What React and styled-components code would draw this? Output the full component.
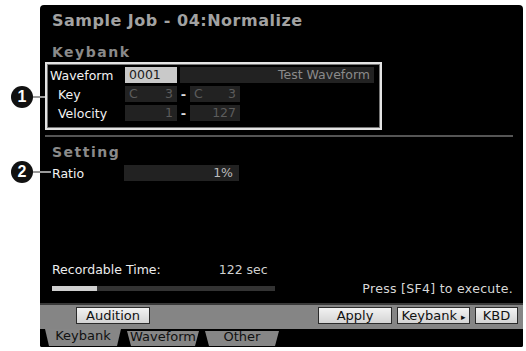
import React from "react";
import styled, { createGlobalStyle } from "styled-components";

const GlobalStyle = createGlobalStyle`
  html, body {
    margin: 0;
    padding: 0;
    background: #ffffff;
  }
  body {
    font-family: "DejaVu Sans", "Liberation Sans", sans-serif;
  }
`;

const App = () => {
  return (
    <>
      <GlobalStyle />
      <Page>
        <Callout top={86}>1</Callout>
        <Leader top={96} width={12} />
        <Callout top={161}>2</Callout>
        <Leader top={171} width={18} />
        <Screen>
          <Title>Sample Job - 04:Normalize</Title>
          <Heading>Keybank</Heading>
          <KeyBox>
            <Row>
              <Label>Waveform</Label>
              <Field tone="light">0001</Field>
              <Field tone="dark" wide align="right">
                Test Waveform
              </Field>
            </Row>
            <Row>
              <Label indent>Key</Label>
              <Field tone="dim" align="spread">
                <span>C</span>
                <span>3</span>
              </Field>
              <Dash>-</Dash>
              <Field tone="dim" align="spread">
                <span>C</span>
                <span>3</span>
              </Field>
            </Row>
            <Row>
              <Label indent>Velocity</Label>
              <Field tone="dim" align="right">
                1
              </Field>
              <Dash>-</Dash>
              <Field tone="dim" align="right">
                127
              </Field>
            </Row>
          </KeyBox>
          <Separator />
          <Heading second>Setting</Heading>
          <RatioRow>
            <Label>Ratio</Label>
            <RatioField>1%</RatioField>
          </RatioRow>
          <Spacer />
          <TimeRow>
            <span>Recordable Time:</span>
            <TimeValue>122 sec</TimeValue>
          </TimeRow>
          <StatusRow>
            <Progress>
              <ProgressFill style={{ width: "20%" }} />
            </Progress>
            <Hint>Press [SF4] to execute.</Hint>
          </StatusRow>
          <ButtonBar>
            <Button width={74} style={{ marginLeft: 36 }}>
              Audition
            </Button>
            <Grow />
            <Button width={74}>Apply</Button>
            <Button width={73}>
              Keybank <Arrow>▸</Arrow>
            </Button>
            <Button width={43}>KBD</Button>
          </ButtonBar>
          <Tabs>
            <Tab active width={76}>
              Keybank
            </Tab>
            <Tab width={72}>Waveform</Tab>
            <Tab width={74}>Other</Tab>
          </Tabs>
        </Screen>
      </Page>
    </>
  );
};

const Page = styled.div`
  position: relative;
  width: 526px;
  height: 351px;
  padding: 5px 3px 4px 40px;
  box-sizing: border-box;
  display: flex;
`;

const Callout = styled.div`
  position: absolute;
  left: 11px;
  top: ${(p) => p.top}px;
  width: 22px;
  height: 22px;
  border-radius: 50%;
  background: #111;
  color: #fff;
  font-family: "Liberation Sans", Arial, sans-serif;
  font-weight: bold;
  font-size: 16px;
  line-height: 22px;
  text-align: center;
  z-index: 2;
`;

const Leader = styled.div`
  position: absolute;
  left: 33px;
  top: ${(p) => p.top}px;
  width: ${(p) => p.width}px;
  height: 2px;
  background: #9a9a9a;
  z-index: 2;
`;

const Screen = styled.div`
  flex: 1;
  background: #000;
  border-radius: 4px 4px 2px 2px;
  display: flex;
  flex-direction: column;
  overflow: hidden;
  color: #f0f0f0;
`;

const Title = styled.div`
  height: 28px;
  line-height: 31px;
  padding-left: 12px;
  font-size: 16px;
  font-weight: bold;
  letter-spacing: 0.5px;
  color: #a2a2a2;
`;

const Heading = styled.div`
  margin-top: ${(p) => (p.second ? 6 : 10)}px;
  height: 19px;
  line-height: 19px;
  padding-left: 12px;
  font-size: 14px;
  font-weight: bold;
  letter-spacing: 1.5px;
  color: #8a8a8a;
`;

const KeyBox = styled.div`
  margin-left: 5px;
  width: 337px;
  height: 68px;
  box-sizing: border-box;
  border: 2px solid #e4e4e4;
  box-shadow: inset 0 0 0 1px #777;
  padding: 3px 0 0 3px;
  display: flex;
  flex-direction: column;
  gap: 3px;
`;

const Row = styled.div`
  display: grid;
  grid-template-columns: 75px 52px 13px 50px;
  align-items: center;
  height: 16px;
`;

const Label = styled.div`
  font-size: 12.5px;
  color: #f2f2f2;
  padding-left: ${(p) => (p.indent ? 8 : 0)}px;
  white-space: nowrap;
`;

const fieldColors = {
  light: { bg: "#c9c9c9", fg: "#1a1a1a" },
  dark: { bg: "#222", fg: "#8a8a8a" },
  dim: { bg: "#222", fg: "#5c5c5c" },
};

const Field = styled.div`
  height: 16px;
  line-height: 16px;
  box-sizing: border-box;
  padding: 0 4px;
  font-size: 12.5px;
  background: ${(p) => fieldColors[p.tone].bg};
  color: ${(p) => fieldColors[p.tone].fg};
  display: flex;
  justify-content: ${(p) =>
    p.align === "right" ? "flex-end" : p.align === "spread" ? "space-between" : "flex-start"};
  ${(p) =>
    p.wide &&
    `
    grid-column: 3 / span 2;
    width: 194px;
    margin-left: 3px;
  `}
`;

const Dash = styled.div`
  text-align: center;
  font-weight: bold;
  font-size: 13px;
  color: #ddd;
`;

const Separator = styled.div`
  margin: 5px 10px 0 5px;
  height: 2px;
  background: #555;
`;

const RatioRow = styled.div`
  margin-top: 3px;
  padding-left: 12px;
  display: grid;
  grid-template-columns: 72px 115px;
  align-items: center;
  height: 16px;
`;

const RatioField = styled.div`
  height: 16px;
  line-height: 16px;
  background: #222;
  color: #bdbdbd;
  font-size: 12.5px;
  text-align: right;
  padding-right: 6px;
`;

const Spacer = styled.div`
  flex: 1;
`;

const TimeRow = styled.div`
  padding-left: 12px;
  display: flex;
  font-size: 12.5px;
  color: #ededed;
  height: 16px;
  line-height: 16px;
`;

const TimeValue = styled.span`
  margin-left: 58px;
  color: #d0d0d0;
`;

const StatusRow = styled.div`
  margin-top: 1px;
  padding: 0 10px 0 12px;
  height: 18px;
  display: flex;
  align-items: center;
  justify-content: space-between;
`;

const Progress = styled.div`
  width: 223px;
  height: 5px;
  background: #333;
`;

const ProgressFill = styled.div`
  height: 100%;
  background: #cfcfcf;
`;

const Hint = styled.div`
  font-size: 12.5px;
  color: #d8d8d8;
  letter-spacing: 0.3px;
`;

const ButtonBar = styled.div`
  margin-top: 6px;
  height: 24px;
  border-top: 2px solid #3a3a3a;
  background: #858585;
  display: flex;
  align-items: center;
  gap: 5px;
  padding: 0 5px 0 0;
`;

const Grow = styled.div`
  flex: 1;
`;

const Button = styled.div`
  width: ${(p) => p.width}px;
  height: 17px;
  margin-bottom: 4px;
  box-sizing: border-box;
  border: 1px solid #2a2a2a;
  background: linear-gradient(#f2f2f2, #d4d4d4);
  color: #111;
  font-size: 13px;
  line-height: 15px;
  text-align: center;
  white-space: nowrap;
`;

const Arrow = styled.span`
  font-size: 9px;
`;

const Tabs = styled.div`
  height: 18px;
  display: flex;
  gap: 6px;
  padding-left: 5px;
  background: #000;
`;

const Tab = styled.div`
  width: ${(p) => p.width}px;
  height: ${(p) => (p.active ? 17 : 15)}px;
  margin-top: ${(p) => (p.active ? 0 : 2)}px;
  background: #868686;
  color: #111;
  font-size: 13px;
  line-height: ${(p) => (p.active ? 13 : 12)}px;
  text-align: center;
  clip-path: polygon(0 0, 100% 0, calc(100% - 4px) 100%, 4px 100%);
`;

export default App;
